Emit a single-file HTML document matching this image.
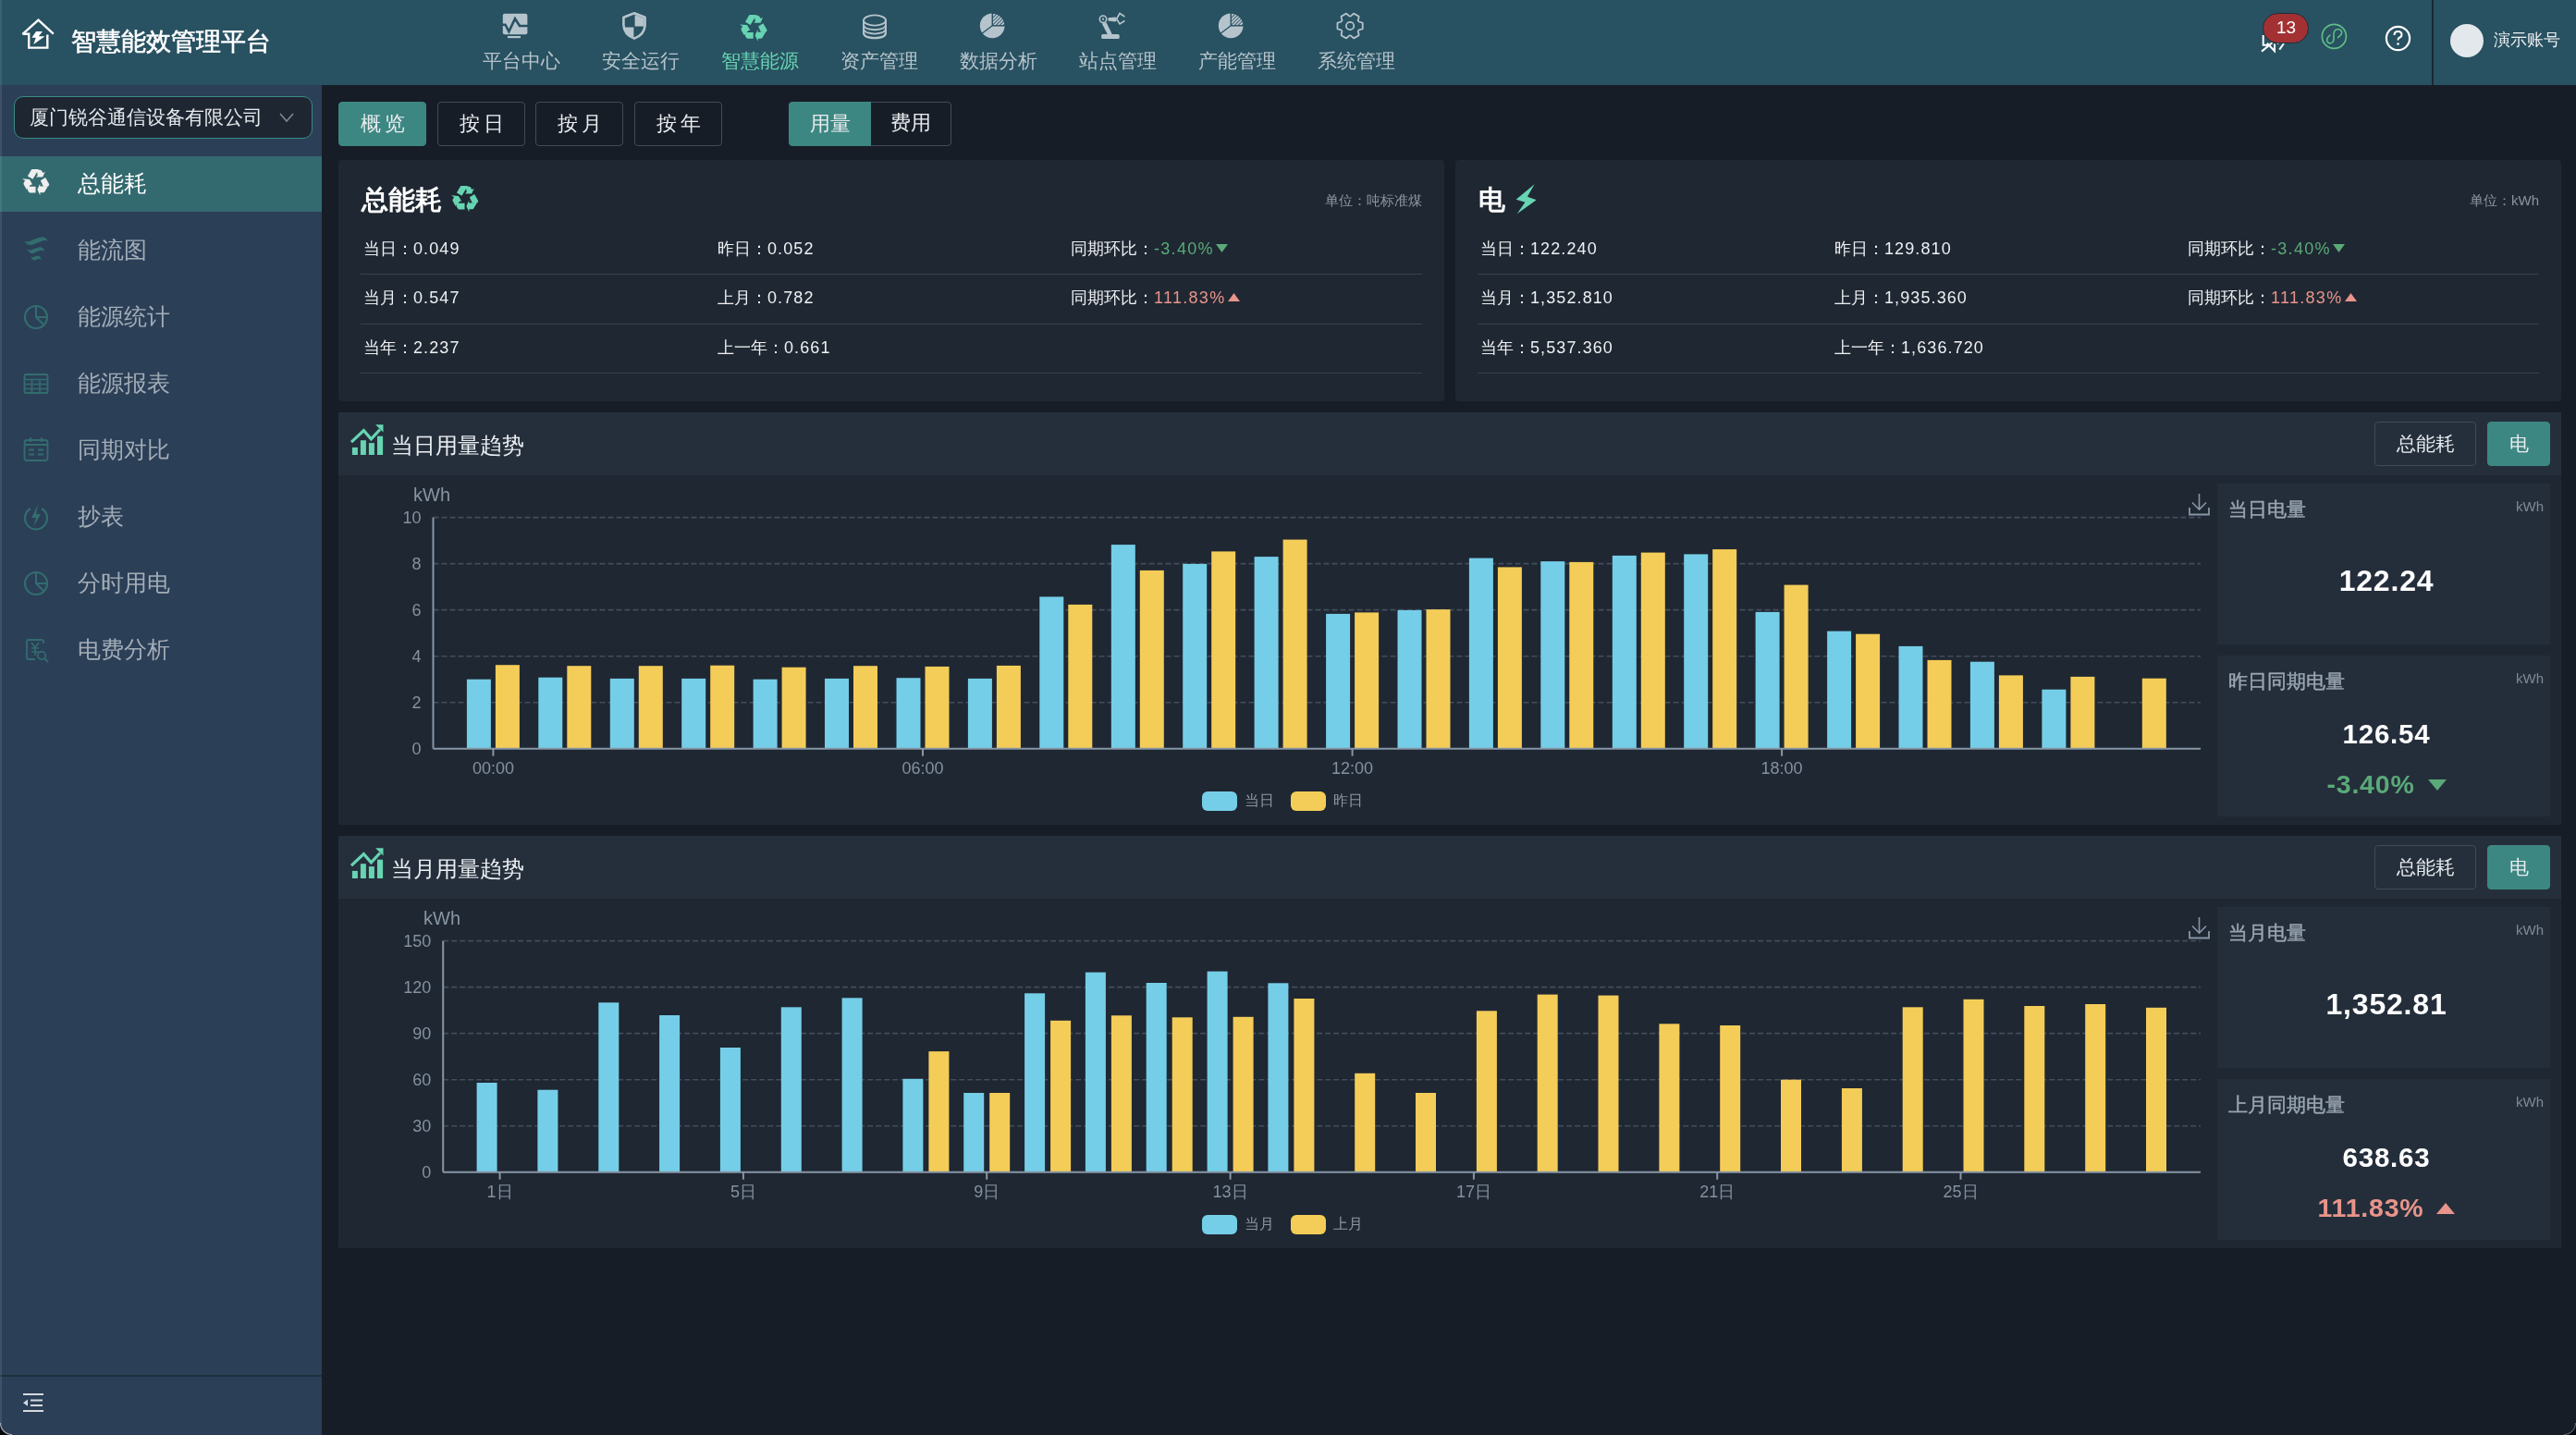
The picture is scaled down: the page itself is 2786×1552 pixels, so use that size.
<!DOCTYPE html><html><head><meta charset="utf-8"><style>
*{box-sizing:border-box;margin:0;padding:0}
html,body{width:2786px;height:1552px;overflow:hidden;background:#171d27;font-family:"Liberation Sans",sans-serif;color:#f2f4f6}
.a{position:absolute}
.t{position:absolute;white-space:nowrap;line-height:1;will-change:transform}
.btn{position:absolute;border:1px solid #404c59;border-radius:4px;display:flex;align-items:center;justify-content:center;font-size:22px;color:#e8ecef;will-change:transform}
.btn.on{background:#3d8782;border-color:#3d8782}
</style></head><body>

<div class="a" style="left:0;top:0;width:2786px;height:92px;background:#285161"></div>
<svg class="a" style="left:20px;top:15px" width="44" height="44" viewBox="20 15 44 44">
<path d="M24.5 36.8 L41.5 21.5 L57.8 36.6" fill="none" stroke="#fff" stroke-width="2.4" stroke-linejoin="miter"/>
<path d="M24.5 36.8 L31.2 36.8 L31.2 51.6 L51.3 51.6 L51.3 37.6" fill="none" stroke="#fff" stroke-width="2.4"/>
<path d="M46 34 L39 34 L34.4 40.8 L38.7 40.8 L36.3 48.1 L48.5 39.2 L41.8 39.2 Z" fill="#fff"/>
</svg>
<div class="t" style="left:77px;top:32px;font-size:27px;color:#fff;-webkit-text-stroke:0.6px #fff">智慧能效管理平台</div>
<div class="t" style="left:522px;top:55px;font-size:21px;color:#b6c3cb">平台中心</div>
<div class="t" style="left:651px;top:55px;font-size:21px;color:#b6c3cb">安全运行</div>
<div class="t" style="left:780px;top:55px;font-size:21px;color:#67d4b2">智慧能源</div>
<div class="t" style="left:909px;top:55px;font-size:21px;color:#b6c3cb">资产管理</div>
<div class="t" style="left:1038px;top:55px;font-size:21px;color:#b6c3cb">数据分析</div>
<div class="t" style="left:1167px;top:55px;font-size:21px;color:#b6c3cb">站点管理</div>
<div class="t" style="left:1296px;top:55px;font-size:21px;color:#b6c3cb">产能管理</div>
<div class="t" style="left:1425px;top:55px;font-size:21px;color:#b6c3cb">系统管理</div>
<svg class="a" style="left:537px;top:8px" width="40" height="40" viewBox="0 0 40 40"><rect x="6.8" y="6.7" width="26.6" height="22.5" rx="2" fill="#b5c4cc"/><rect x="12" y="31" width="14" height="2.2" fill="#b5c4cc"/><path d="M5 18.7 L9.5 18.7 L13.4 26 L20 12.2 L25 20 L35 20" fill="none" stroke="#285161" stroke-width="2.6"/></svg>
<svg class="a" style="left:666px;top:8px" width="40" height="40" viewBox="0 0 40 40"><path d="M20 6.3 L31.6 10.8 L31.6 19 Q31.2 29.5 20 33.6 Q8.8 29.5 8.4 19 L8.4 10.8 Z" fill="none" stroke="#b5c4cc" stroke-width="2.6" stroke-linejoin="round"/><path d="M20.6 8 L30.5 11.8 L30.5 20.6 L20.6 20.6 Z" fill="#b5c4cc"/><path d="M9.5 21.4 L19.4 21.4 L19.4 32.3 Q10.5 28.5 9.5 21.4 Z" fill="#b5c4cc"/></svg>
<svg style="position:absolute;left:796px;top:10.7px" width="38.4" height="38.4" viewBox="0 0 1435 1435"><path d="M375 475 L525 210 L565 190 L830 190 L585 595 Z M760 300 L790 235 L870 205 L940 250 L1000 340 L1085 295 L990 510 L720 510 L780 445 Z M900 655 L1100 530 L1255 800 L1230 875 L1005 875 Z M880 890 L1205 880 L1055 1130 L1010 1145 L885 1145 L880 1260 L770 1020 L880 775 Z M400 900 L700 900 L700 1150 L470 1150 L430 1130 L365 1025 Z M330 1020 L215 815 L205 760 L265 650 L150 580 L450 600 L570 810 L500 820 Z" fill="#67d4b2"/></svg>
<svg class="a" style="left:924px;top:8px" width="40" height="40" viewBox="0 0 40 40"><ellipse cx="22" cy="14" rx="12" ry="5.6" fill="none" stroke="#b5c4cc" stroke-width="1.9"/><path d="M10 14 L10 27.5 Q10 33 22 33.4 Q34 33 34 27.5 L34 14" fill="none" stroke="#b5c4cc" stroke-width="1.9"/><path d="M10 18.8 Q10 23.8 22 24.3 Q34 23.8 34 18.8" fill="none" stroke="#b5c4cc" stroke-width="1.9"/><path d="M10 23.1 Q10 28.1 22 28.6 Q34 28.1 34 23.1" fill="none" stroke="#b5c4cc" stroke-width="1.9"/><path d="M10 27.4 Q10 32.4 22 32.9 Q34 32.4 34 27.4" fill="none" stroke="#b5c4cc" stroke-width="1.9"/></svg>
<svg class="a" style="left:1053px;top:8px" width="40" height="40" viewBox="0 0 40 40"><defs><clipPath id="pc4"><path d="M20.9 19.1 L20.9 5.4 L34.6 5.4 L34.6 19.1 Z"/></clipPath></defs><circle cx="20.2" cy="19.8" r="13.4" fill="#b5c4cc"/><path d="M20.2 19.8 L20.2 5.4 L34.6 5.4 L34.6 19.8 Z" fill="#285161"/><g clip-path="url(#pc4)"><circle cx="20.2" cy="19.8" r="13.4" fill="none" stroke="#b5c4cc" stroke-width="0"/><g clip-path="url(#pq4)"><line x1="4.199999999999999" y1="21.8" x2="20.2" y2="5.800000000000001" stroke="#b5c4cc" stroke-width="1.9"/><line x1="8.1" y1="21.8" x2="24.099999999999998" y2="5.800000000000001" stroke="#b5c4cc" stroke-width="1.9"/><line x1="12.0" y1="21.8" x2="28.0" y2="5.800000000000001" stroke="#b5c4cc" stroke-width="1.9"/><line x1="15.899999999999999" y1="21.8" x2="31.9" y2="5.800000000000001" stroke="#b5c4cc" stroke-width="1.9"/><line x1="19.799999999999997" y1="21.8" x2="35.8" y2="5.800000000000001" stroke="#b5c4cc" stroke-width="1.9"/><line x1="23.7" y1="21.8" x2="39.7" y2="5.800000000000001" stroke="#b5c4cc" stroke-width="1.9"/><line x1="27.599999999999998" y1="21.8" x2="43.599999999999994" y2="5.800000000000001" stroke="#b5c4cc" stroke-width="1.9"/><line x1="31.5" y1="21.8" x2="47.5" y2="5.800000000000001" stroke="#b5c4cc" stroke-width="1.9"/><line x1="35.4" y1="21.8" x2="51.4" y2="5.800000000000001" stroke="#b5c4cc" stroke-width="1.9"/></g></g><defs><clipPath id="pq4"><circle cx="20.2" cy="19.8" r="13.1"/></clipPath></defs><path d="M20.2 5.4 L20.2 19.8 L34.6 19.8 M20.2 19.8 L9.0 28.3" fill="none" stroke="#285161" stroke-width="1.3"/></svg>
<svg class="a" style="left:1311px;top:8px" width="40" height="40" viewBox="0 0 40 40"><defs><clipPath id="pc6"><path d="M20.9 19.1 L20.9 5.4 L34.6 5.4 L34.6 19.1 Z"/></clipPath></defs><circle cx="20.2" cy="19.8" r="13.4" fill="#b5c4cc"/><path d="M20.2 19.8 L20.2 5.4 L34.6 5.4 L34.6 19.8 Z" fill="#285161"/><g clip-path="url(#pc6)"><circle cx="20.2" cy="19.8" r="13.4" fill="none" stroke="#b5c4cc" stroke-width="0"/><g clip-path="url(#pq6)"><line x1="4.199999999999999" y1="21.8" x2="20.2" y2="5.800000000000001" stroke="#b5c4cc" stroke-width="1.9"/><line x1="8.1" y1="21.8" x2="24.099999999999998" y2="5.800000000000001" stroke="#b5c4cc" stroke-width="1.9"/><line x1="12.0" y1="21.8" x2="28.0" y2="5.800000000000001" stroke="#b5c4cc" stroke-width="1.9"/><line x1="15.899999999999999" y1="21.8" x2="31.9" y2="5.800000000000001" stroke="#b5c4cc" stroke-width="1.9"/><line x1="19.799999999999997" y1="21.8" x2="35.8" y2="5.800000000000001" stroke="#b5c4cc" stroke-width="1.9"/><line x1="23.7" y1="21.8" x2="39.7" y2="5.800000000000001" stroke="#b5c4cc" stroke-width="1.9"/><line x1="27.599999999999998" y1="21.8" x2="43.599999999999994" y2="5.800000000000001" stroke="#b5c4cc" stroke-width="1.9"/><line x1="31.5" y1="21.8" x2="47.5" y2="5.800000000000001" stroke="#b5c4cc" stroke-width="1.9"/><line x1="35.4" y1="21.8" x2="51.4" y2="5.800000000000001" stroke="#b5c4cc" stroke-width="1.9"/></g></g><defs><clipPath id="pq6"><circle cx="20.2" cy="19.8" r="13.1"/></clipPath></defs><path d="M20.2 5.4 L20.2 19.8 L34.6 19.8 M20.2 19.8 L9.0 28.3" fill="none" stroke="#285161" stroke-width="1.3"/></svg>
<svg class="a" style="left:1182px;top:8px" width="40" height="40" viewBox="0 0 40 40"><circle cx="11" cy="12.7" r="3.7" fill="none" stroke="#b5c4cc" stroke-width="1.6"/><circle cx="11" cy="12.7" r="1.1" fill="#b5c4cc"/><path d="M16.5 11.3 L24 10.5 L25.5 11.5 L25.5 14.5 L24 15.5 L16.5 14.5 Z" fill="#b5c4cc"/><path d="M25.6 12.5 L29 6.5 L34.4 10" fill="none" stroke="#b5c4cc" stroke-width="1.6"/><path d="M25.6 12.5 L29 18 L34.4 14.5" fill="none" stroke="#b5c4cc" stroke-width="1.6"/><path d="M9.8 17.5 L14.5 16.2 L21 29.5 L16.5 30.5 Z" fill="#b5c4cc"/><rect x="9.2" y="29" width="19.5" height="5" rx="1.6" fill="#b5c4cc"/></svg>
<svg class="a" style="left:1440px;top:8px" width="40" height="40" viewBox="0 0 40 40"><path d="M33.74 16.85 L33.74 23.15 L31.64 23.97 Q27.55 24.30 29.31 28.00 L29.65 30.24 L24.19 33.39 L22.43 31.98 Q20.10 28.60 17.77 31.98 L16.01 33.39 L10.55 30.24 L10.89 28.00 Q12.65 24.30 8.56 23.97 L6.46 23.15 L6.46 16.85 L8.56 16.03 Q12.65 15.70 10.89 12.00 L10.55 9.76 L16.01 6.61 L17.77 8.02 Q20.10 11.40 22.43 8.02 L24.19 6.61 L29.65 9.76 L29.31 12.00 Q27.55 15.70 31.64 16.03 Z" fill="none" stroke="#b5c4cc" stroke-width="1.8" stroke-linejoin="round"/><circle cx="20.1" cy="20.0" r="4.2" fill="none" stroke="#b5c4cc" stroke-width="1.8"/></svg>
<svg class="a" style="left:2440px;top:30px" width="40" height="30" viewBox="0 0 40 30"><path d="M7.7 8 V18.7 H12.5 M6 25.6 L17.5 16.3 M12 16.7 L20 25.2 V17.5 M25.3 23.6 L30 17" fill="none" stroke="#fff" stroke-width="2"/><circle cx="23.6" cy="16.9" r="0.9" fill="#fff"/></svg>
<div class="a" style="left:2447px;top:14px;width:50px;height:33px;border-radius:17px;background:#a33134;border:1.5px solid #1f2d38"></div>
<div class="t" style="left:2462px;top:20px;font-size:19px;color:#fff">13</div>
<svg class="a" style="left:2509px;top:24px" width="31" height="31" viewBox="0 0 31 31"><circle cx="15.4" cy="15.4" r="13" fill="none" stroke="#5fbd87" stroke-width="1.7"/><path d="M10.9 14.1 Q6.5 17.5 8 21 Q10.5 24.5 13.8 21.5 Q15.5 19.5 15 15 Q14.5 9.5 17.5 8 Q21.5 6.5 23.5 10 Q24.5 13 19.5 16.6" fill="none" stroke="#5fbd87" stroke-width="1.6" stroke-linecap="round"/></svg>
<svg class="a" style="left:2578px;top:26px" width="31" height="31" viewBox="0 0 31 31"><circle cx="15.5" cy="15.5" r="12.6" fill="none" stroke="#fff" stroke-width="2.2"/><path d="M11.5 12 Q11.5 8 15.5 8 Q19.5 8 19.5 11.5 Q19.5 14 16.5 15 Q15.5 15.5 15.5 17.5" fill="none" stroke="#fff" stroke-width="2"/><circle cx="15.5" cy="21.5" r="1.3" fill="#fff"/></svg>
<div class="a" style="left:2630px;top:0;width:2px;height:92px;background:#1b2833"></div>
<div class="a" style="left:2650px;top:26px;width:36px;height:36px;border-radius:50%;background:#e3e8ec"></div>
<div class="t" style="left:2697px;top:34px;font-size:18px;color:#eef1f3">演示账号</div>
<div class="a" style="left:0;top:92px;width:348px;height:1460px;background:#2b3f57"></div>
<div class="a" style="left:15px;top:104px;width:323px;height:46px;border:1.5px solid #3b8c86;border-radius:10px;background:#1e2632"></div>
<div class="t" style="left:32px;top:116px;font-size:21px;color:#e6e9ec">厦门锐谷通信设备有限公司</div>
<svg class="a" style="left:300px;top:119px" width="20" height="16" viewBox="0 0 20 16"><path d="M3 4 L10 12 L17 4" fill="none" stroke="#7d8893" stroke-width="1.6"/></svg>
<div class="a" style="left:0;top:169px;width:348px;height:60px;background:#336a6f"></div>
<div class="t" style="left:84px;top:186px;font-size:25px;color:#ffffff">总能耗</div>
<div class="t" style="left:84px;top:258px;font-size:25px;color:#a3adb7">能流图</div>
<div class="t" style="left:84px;top:330px;font-size:25px;color:#a3adb7">能源统计</div>
<div class="t" style="left:84px;top:402px;font-size:25px;color:#a3adb7">能源报表</div>
<div class="t" style="left:84px;top:474px;font-size:25px;color:#a3adb7">同期对比</div>
<div class="t" style="left:84px;top:546px;font-size:25px;color:#a3adb7">抄表</div>
<div class="t" style="left:84px;top:618px;font-size:25px;color:#a3adb7">分时用电</div>
<div class="t" style="left:84px;top:690px;font-size:25px;color:#a3adb7">电费分析</div>
<svg style="position:absolute;left:20px;top:177.6px" width="38" height="38" viewBox="0 0 1435 1435"><path d="M375 475 L525 210 L565 190 L830 190 L585 595 Z M760 300 L790 235 L870 205 L940 250 L1000 340 L1085 295 L990 510 L720 510 L780 445 Z M900 655 L1100 530 L1255 800 L1230 875 L1005 875 Z M880 890 L1205 880 L1055 1130 L1010 1145 L885 1145 L880 1260 L770 1020 L880 775 Z M400 900 L700 900 L700 1150 L470 1150 L430 1130 L365 1025 Z M330 1020 L215 815 L205 760 L265 650 L150 580 L450 600 L570 810 L500 820 Z" fill="#eeeeee"/></svg>
<svg class="a" style="left:22px;top:254px" width="34" height="34" viewBox="0 0 34 34"><path d="M3.9 6.8 Q8 12.5 14 10.5 Q20 8 24.5 6.3 Q27.5 5.5 29.9 6.8 Q27 1.5 22 2.5 Q16 4 11 6.5 Q7 8.5 3.9 6.8 Z M7.1 15.3 Q10 21.5 15 19.8 Q19.5 17.5 22.5 16.8 Q24.5 16.5 26.7 17.6 Q24 12 19.5 13.5 Q15 15 11.5 16.2 Q9 17 7.1 15.3 Z M11.2 23.2 Q13 28.8 16.5 27.2 Q19 25.8 20.5 26 Q21.8 26.2 22.9 27 Q21 21 17.5 22.8 Q15 24 13.5 24.2 Q12 24.3 11.2 23.2 Z" fill="#336d6e"/></svg>
<svg class="a" style="left:22px;top:326px" width="34" height="34" viewBox="0 0 34 34"><circle cx="17" cy="17" r="12" fill="none" stroke="#336d6e" stroke-width="2.2"/><path d="M17 5 L17 17 L29 17 M17 17 L25 25" fill="none" stroke="#336d6e" stroke-width="2"/></svg>
<svg class="a" style="left:22px;top:398px" width="34" height="34" viewBox="0 0 34 34"><rect x="4.5" y="7" width="25" height="20" rx="1" fill="none" stroke="#336d6e" stroke-width="1.8"/><path d="M4.5 12.5 H29.5 M4.5 17.5 H29.5 M4.5 22.5 H29.5 M12.5 12.5 V27 M21 12.5 V27" stroke="#336d6e" stroke-width="1.6"/></svg>
<svg class="a" style="left:22px;top:470px" width="34" height="34" viewBox="0 0 34 34"><rect x="4.5" y="6" width="25" height="22" rx="2.5" fill="none" stroke="#336d6e" stroke-width="1.8"/><path d="M11 3 V8 M23 3 V8 M4.5 11 H29.5 M9 16.5 H15 M19 16.5 H25 M9 21.5 H15 M19 21.5 H25" stroke="#336d6e" stroke-width="1.8"/></svg>
<svg class="a" style="left:22px;top:542px" width="34" height="34" viewBox="0 0 34 34"><path d="M11 8 A12 12 0 1 0 23 8" fill="none" stroke="#336d6e" stroke-width="2.2"/><path d="M19 4 L12 18 L17 18 L14 28 L22 14 L17 14 Z" fill="#336d6e"/></svg>
<svg class="a" style="left:22px;top:614px" width="34" height="34" viewBox="0 0 34 34"><circle cx="17" cy="17" r="12" fill="none" stroke="#336d6e" stroke-width="2.2"/><path d="M17 5 L17 17 L29 17 M17 17 L25 25" fill="none" stroke="#336d6e" stroke-width="2"/></svg>
<svg class="a" style="left:22px;top:686px" width="34" height="34" viewBox="0 0 34 34"><path d="M25 10 L25 8 Q25 6 23 6 L9 6 Q7 6 7 8 L7 25 Q7 27 9 27 L16 27" fill="none" stroke="#336d6e" stroke-width="1.8"/><path d="M12 9 L16 14 L20 9 M12 15 H20 M12 19 H20 M16 14 V23" stroke="#336d6e" stroke-width="1.6" fill="none"/><circle cx="23" cy="23" r="4.2" fill="none" stroke="#336d6e" stroke-width="1.8"/><path d="M26 26 L30 30" stroke="#336d6e" stroke-width="2"/></svg>
<div class="a" style="left:0;top:1487px;width:348px;height:2px;background:#1f2e3c"></div>
<svg class="a" style="left:24px;top:1505px" width="24" height="24" viewBox="0 0 24 24"><path d="M1 3 H23 M9 9.5 H22 M9 15 H22 M1 21 H23" stroke="#d5d9dd" stroke-width="2.2"/><path d="M1 12.2 L6 8.6 L6 15.8 Z" fill="#d5d9dd"/></svg>
<div class="btn on" style="left:366px;top:110px;width:95px;height:48px;letter-spacing:4px;padding-left:4px">概览</div>
<div class="btn" style="left:473px;top:110px;width:95px;height:48px;letter-spacing:4px;padding-left:4px">按日</div>
<div class="btn" style="left:579px;top:110px;width:95px;height:48px;letter-spacing:4px;padding-left:4px">按月</div>
<div class="btn" style="left:686px;top:110px;width:95px;height:48px;letter-spacing:4px;padding-left:4px">按年</div>
<div class="a" style="left:853px;top:110px;width:176px;height:48px;border:1px solid #404c59;border-radius:4px"></div>
<div class="btn on" style="left:853px;top:110px;width:89px;height:48px;border-radius:4px 0 0 4px">用量</div>
<div class="t" style="left:963px;top:122px;font-size:22px;color:#e8ecef">费用</div>
<div class="a" style="left:366px;top:173px;width:1196px;height:261px;background:#1f2732;border-radius:4px"></div>
<div class="t" style="left:391px;top:201.5px;font-size:29px;font-weight:bold;color:#fff">总能耗</div>
<svg style="position:absolute;left:484px;top:196px" width="38" height="38" viewBox="0 0 1435 1435"><path d="M375 475 L525 210 L565 190 L830 190 L585 595 Z M760 300 L790 235 L870 205 L940 250 L1000 340 L1085 295 L990 510 L720 510 L780 445 Z M900 655 L1100 530 L1255 800 L1230 875 L1005 875 Z M880 890 L1205 880 L1055 1130 L1010 1145 L885 1145 L880 1260 L770 1020 L880 775 Z M400 900 L700 900 L700 1150 L470 1150 L430 1130 L365 1025 Z M330 1020 L215 815 L205 760 L265 650 L150 580 L450 600 L570 810 L500 820 Z" fill="#67d4b2"/></svg>
<div class="t" style="right:1248px;top:209px;font-size:15px;color:#8c96a0">单位：吨标准煤</div>
<div class="a" style="left:390px;top:296.4px;width:1148px;height:1px;background:#38414d"></div>
<div class="t" style="left:393.0px;top:260.0px;font-size:18px;color:#eef0f2">当日：<span style="letter-spacing:1.1px">0.049</span></div>
<div class="t" style="left:775.5px;top:260.0px;font-size:18px;color:#eef0f2">昨日：<span style="letter-spacing:1.1px">0.052</span></div>
<div class="a" style="left:390px;top:349.9px;width:1148px;height:1px;background:#38414d"></div>
<div class="t" style="left:393.0px;top:313.3px;font-size:18px;color:#eef0f2">当月：<span style="letter-spacing:1.1px">0.547</span></div>
<div class="t" style="left:775.5px;top:313.3px;font-size:18px;color:#eef0f2">上月：<span style="letter-spacing:1.1px">0.782</span></div>
<div class="a" style="left:390px;top:403.4px;width:1148px;height:1px;background:#38414d"></div>
<div class="t" style="left:393.0px;top:366.6px;font-size:18px;color:#eef0f2">当年：<span style="letter-spacing:1.1px">2.237</span></div>
<div class="t" style="left:775.5px;top:366.6px;font-size:18px;color:#eef0f2">上一年：<span style="letter-spacing:1.1px">0.661</span></div>
<div class="t" style="left:1158px;top:260.0px;font-size:18px;color:#eef0f2">同期环比：<span style="color:#5aaa78;letter-spacing:1.3px">-3.40%</span><svg width="13" height="9" viewBox="0 0 13 9" style="margin-left:2px;vertical-align:2px"><path d="M0 0 L13 0 L6.5 9 Z" fill="#5aaa78"/></svg></div>
<div class="t" style="left:1158px;top:313.3px;font-size:18px;color:#eef0f2">同期环比：<span style="color:#e8948a;letter-spacing:1.3px">111.83%</span><svg width="13" height="9" viewBox="0 0 13 9" style="margin-left:2px;vertical-align:2px"><path d="M0 9 L13 9 L6.5 0 Z" fill="#e8948a"/></svg></div>
<div class="a" style="left:1574px;top:173px;width:1196px;height:261px;background:#1f2732;border-radius:4px"></div>
<div class="t" style="left:1599px;top:201.5px;font-size:29px;font-weight:bold;color:#fff">电</div>
<svg class="a" style="left:1637px;top:199px" width="28" height="34" viewBox="0 0 28 34"><path d="M22.6 0.3 L2.6 16.7 L12.4 19.7 L3.7 32.3 L24.7 17.2 L14.9 13.7 Z" fill="#67d4b2"/></svg>
<div class="t" style="right:40px;top:209px;font-size:15px;color:#8c96a0">单位：kWh</div>
<div class="a" style="left:1598px;top:296.4px;width:1148px;height:1px;background:#38414d"></div>
<div class="t" style="left:1601.0px;top:260.0px;font-size:18px;color:#eef0f2">当日：<span style="letter-spacing:1.1px">122.240</span></div>
<div class="t" style="left:1983.5px;top:260.0px;font-size:18px;color:#eef0f2">昨日：<span style="letter-spacing:1.1px">129.810</span></div>
<div class="a" style="left:1598px;top:349.9px;width:1148px;height:1px;background:#38414d"></div>
<div class="t" style="left:1601.0px;top:313.3px;font-size:18px;color:#eef0f2">当月：<span style="letter-spacing:1.1px">1,352.810</span></div>
<div class="t" style="left:1983.5px;top:313.3px;font-size:18px;color:#eef0f2">上月：<span style="letter-spacing:1.1px">1,935.360</span></div>
<div class="a" style="left:1598px;top:403.4px;width:1148px;height:1px;background:#38414d"></div>
<div class="t" style="left:1601.0px;top:366.6px;font-size:18px;color:#eef0f2">当年：<span style="letter-spacing:1.1px">5,537.360</span></div>
<div class="t" style="left:1983.5px;top:366.6px;font-size:18px;color:#eef0f2">上一年：<span style="letter-spacing:1.1px">1,636.720</span></div>
<div class="t" style="left:2366px;top:260.0px;font-size:18px;color:#eef0f2">同期环比：<span style="color:#5aaa78;letter-spacing:1.3px">-3.40%</span><svg width="13" height="9" viewBox="0 0 13 9" style="margin-left:2px;vertical-align:2px"><path d="M0 0 L13 0 L6.5 9 Z" fill="#5aaa78"/></svg></div>
<div class="t" style="left:2366px;top:313.3px;font-size:18px;color:#eef0f2">同期环比：<span style="color:#e8948a;letter-spacing:1.3px">111.83%</span><svg width="13" height="9" viewBox="0 0 13 9" style="margin-left:2px;vertical-align:2px"><path d="M0 9 L13 9 L6.5 0 Z" fill="#e8948a"/></svg></div>
<div class="a" style="left:366px;top:446px;width:2404px;height:446px;background:#1f2732;overflow:hidden"><div class="a" style="left:0;top:0;width:2404px;height:68px;background:#252f3c"></div></div>
<svg class="a" style="left:378px;top:458px" width="40" height="36" viewBox="0 0 40 36"><rect x="2.9" y="25.9" width="6" height="8.1" fill="#67d4b2"/><rect x="11.9" y="18.2" width="6" height="15.8" fill="#67d4b2"/><rect x="20.9" y="21.1" width="6" height="12.9" fill="#67d4b2"/><rect x="30" y="13.7" width="6.1" height="20.3" fill="#67d4b2"/><path d="M2 20.1 L15.4 7.6 L23.4 16.8 L33 6.5" fill="none" stroke="#67d4b2" stroke-width="3.2"/><path d="M28.1 1.2 L36.5 1.2 L36.5 9.4 Z" fill="#67d4b2"/></svg>
<div class="t" style="left:423px;top:470px;font-size:24px;color:#eceff2">当日用量趋势</div>
<div class="btn" style="left:2568px;top:456px;width:110px;height:48px;font-size:21px">总能耗</div>
<div class="btn on" style="left:2690px;top:456px;width:68px;height:48px;font-size:21px">电</div>
<svg class="a" style="left:0;top:0" width="2786" height="1552" viewBox="0 0 2786 1552"><text x="455.5" y="816.2" text-anchor="end" font-size="18" fill="#8491a1" font-family="Liberation Sans">0</text><line x1="468.5" y1="759.7" x2="2380" y2="759.7" stroke="#424e5c" stroke-width="1.6" stroke-dasharray="6 3"/><text x="455.5" y="766.2" text-anchor="end" font-size="18" fill="#8491a1" font-family="Liberation Sans">2</text><line x1="468.5" y1="709.7" x2="2380" y2="709.7" stroke="#424e5c" stroke-width="1.6" stroke-dasharray="6 3"/><text x="455.5" y="716.2" text-anchor="end" font-size="18" fill="#8491a1" font-family="Liberation Sans">4</text><line x1="468.5" y1="659.6" x2="2380" y2="659.6" stroke="#424e5c" stroke-width="1.6" stroke-dasharray="6 3"/><text x="455.5" y="666.1" text-anchor="end" font-size="18" fill="#8491a1" font-family="Liberation Sans">6</text><line x1="468.5" y1="609.6" x2="2380" y2="609.6" stroke="#424e5c" stroke-width="1.6" stroke-dasharray="6 3"/><text x="455.5" y="616.1" text-anchor="end" font-size="18" fill="#8491a1" font-family="Liberation Sans">8</text><line x1="468.5" y1="559.6" x2="2380" y2="559.6" stroke="#424e5c" stroke-width="1.6" stroke-dasharray="6 3"/><text x="455.5" y="566.1" text-anchor="end" font-size="18" fill="#8491a1" font-family="Liberation Sans">10</text><line x1="468.5" y1="559.6" x2="468.5" y2="809.7" stroke="#8796a6" stroke-width="2"/><rect x="504.9" y="734.7" width="26" height="75.0" fill="#75cee8"/><rect x="535.9" y="719.2" width="26" height="90.5" fill="#f4cd58"/><rect x="582.3" y="732.7" width="26" height="77.0" fill="#75cee8"/><rect x="613.3" y="720.2" width="26" height="89.5" fill="#f4cd58"/><rect x="659.8" y="733.9" width="26" height="75.8" fill="#75cee8"/><rect x="690.8" y="720.2" width="26" height="89.5" fill="#f4cd58"/><rect x="737.2" y="733.9" width="26" height="75.8" fill="#75cee8"/><rect x="768.2" y="719.7" width="26" height="90.0" fill="#f4cd58"/><rect x="814.6" y="734.7" width="26" height="75.0" fill="#75cee8"/><rect x="845.6" y="721.7" width="26" height="88.0" fill="#f4cd58"/><rect x="892.0" y="733.9" width="26" height="75.8" fill="#75cee8"/><rect x="923.0" y="720.2" width="26" height="89.5" fill="#f4cd58"/><rect x="969.5" y="733.2" width="26" height="76.5" fill="#75cee8"/><rect x="1000.5" y="720.9" width="26" height="88.8" fill="#f4cd58"/><rect x="1046.9" y="733.9" width="26" height="75.8" fill="#75cee8"/><rect x="1077.9" y="719.9" width="26" height="89.8" fill="#f4cd58"/><rect x="1124.3" y="645.4" width="26" height="164.3" fill="#75cee8"/><rect x="1155.3" y="653.9" width="26" height="155.8" fill="#f4cd58"/><rect x="1201.8" y="589.1" width="26" height="220.6" fill="#75cee8"/><rect x="1232.8" y="616.9" width="26" height="192.8" fill="#f4cd58"/><rect x="1279.2" y="609.9" width="26" height="199.8" fill="#75cee8"/><rect x="1310.2" y="596.4" width="26" height="213.3" fill="#f4cd58"/><rect x="1356.6" y="602.1" width="26" height="207.6" fill="#75cee8"/><rect x="1387.6" y="583.6" width="26" height="226.1" fill="#f4cd58"/><rect x="1434.1" y="663.9" width="26" height="145.8" fill="#75cee8"/><rect x="1465.1" y="662.4" width="26" height="147.3" fill="#f4cd58"/><rect x="1511.5" y="659.9" width="26" height="149.8" fill="#75cee8"/><rect x="1542.5" y="659.1" width="26" height="150.6" fill="#f4cd58"/><rect x="1588.9" y="603.6" width="26" height="206.1" fill="#75cee8"/><rect x="1619.9" y="613.4" width="26" height="196.3" fill="#f4cd58"/><rect x="1666.3" y="607.1" width="26" height="202.6" fill="#75cee8"/><rect x="1697.3" y="607.9" width="26" height="201.8" fill="#f4cd58"/><rect x="1743.8" y="600.9" width="26" height="208.8" fill="#75cee8"/><rect x="1774.8" y="597.6" width="26" height="212.1" fill="#f4cd58"/><rect x="1821.2" y="599.4" width="26" height="210.3" fill="#75cee8"/><rect x="1852.2" y="594.1" width="26" height="215.6" fill="#f4cd58"/><rect x="1898.6" y="661.9" width="26" height="147.8" fill="#75cee8"/><rect x="1929.6" y="632.6" width="26" height="177.1" fill="#f4cd58"/><rect x="1976.1" y="682.6" width="26" height="127.1" fill="#75cee8"/><rect x="2007.1" y="685.7" width="26" height="124.0" fill="#f4cd58"/><rect x="2053.5" y="698.9" width="26" height="110.8" fill="#75cee8"/><rect x="2084.5" y="713.9" width="26" height="95.8" fill="#f4cd58"/><rect x="2130.9" y="715.7" width="26" height="94.0" fill="#75cee8"/><rect x="2161.9" y="730.4" width="26" height="79.3" fill="#f4cd58"/><rect x="2208.4" y="745.7" width="26" height="64.0" fill="#75cee8"/><rect x="2239.4" y="731.9" width="26" height="77.8" fill="#f4cd58"/><rect x="2316.8" y="733.7" width="26" height="76.0" fill="#f4cd58"/><line x1="468.5" y1="809.7" x2="2380" y2="809.7" stroke="#8796a6" stroke-width="2"/><line x1="533.4" y1="809.7" x2="533.4" y2="817.7" stroke="#8796a6" stroke-width="2"/><text x="533.4" y="836.7" text-anchor="middle" font-size="18" fill="#8491a1" font-family="Liberation Sans">00:00</text><line x1="998.0" y1="809.7" x2="998.0" y2="817.7" stroke="#8796a6" stroke-width="2"/><text x="998.0" y="836.7" text-anchor="middle" font-size="18" fill="#8491a1" font-family="Liberation Sans">06:00</text><line x1="1462.6" y1="809.7" x2="1462.6" y2="817.7" stroke="#8796a6" stroke-width="2"/><text x="1462.6" y="836.7" text-anchor="middle" font-size="18" fill="#8491a1" font-family="Liberation Sans">12:00</text><line x1="1927.1" y1="809.7" x2="1927.1" y2="817.7" stroke="#8796a6" stroke-width="2"/><text x="1927.1" y="836.7" text-anchor="middle" font-size="18" fill="#8491a1" font-family="Liberation Sans">18:00</text></svg>
<div class="t" style="left:447px;top:525px;font-size:20px;color:#8795a4">kWh</div>
<svg class="a" style="left:2366px;top:533px" width="25" height="26" viewBox="0 0 25 26"><path d="M12.5 1 V18 M5 10.5 L12.5 18 L20 10.5" fill="none" stroke="#8796a6" stroke-width="1.6"/><path d="M2 16 V23.5 H23 V16" fill="none" stroke="#8796a6" stroke-width="1.8"/></svg>
<div class="a" style="left:1300px;top:856px;width:38px;height:21px;border-radius:6px;background:#75cee8"></div>
<div class="t" style="left:1346px;top:858px;font-size:16px;color:#8c97a3">当日</div>
<div class="a" style="left:1396px;top:856px;width:38px;height:21px;border-radius:6px;background:#f4cd58"></div>
<div class="t" style="left:1442px;top:858px;font-size:16px;color:#8c97a3">昨日</div>
<div class="a" style="left:2398px;top:523px;width:360px;height:174px;background:#242e3b"></div>
<div class="a" style="left:2398px;top:709px;width:360px;height:174px;background:#242e3b"></div>
<div class="t" style="left:2410px;top:540px;font-size:21px;color:#9aa6b2;-webkit-text-stroke:0.4px #9aa6b2">当日电量</div>
<div class="t" style="right:35px;top:540px;font-size:15px;color:#7f8a95">kWh</div>
<div class="t" style="left:2401px;width:360px;text-align:center;top:612px;font-size:32px;letter-spacing:0.8px;font-weight:bold;color:#fff">122.24</div>
<div class="t" style="left:2410px;top:726px;font-size:21px;color:#9aa6b2;-webkit-text-stroke:0.4px #9aa6b2">昨日同期电量</div>
<div class="t" style="right:35px;top:726px;font-size:15px;color:#7f8a95">kWh</div>
<div class="t" style="left:2401px;width:360px;text-align:center;top:779px;font-size:29.5px;letter-spacing:0.8px;font-weight:bold;color:#fff">126.54</div>
<div class="t" style="left:2401px;width:360px;text-align:center;top:834px;font-size:28.5px;letter-spacing:0.8px;font-weight:bold;color:#5aaa78">-3.40%<svg width="20" height="12" viewBox="0 0 20 12" style="margin-left:14px;vertical-align:3px"><path d="M0 0 L20 0 L10 12 Z" fill="#5aaa78"/></svg></div>
<div class="a" style="left:366px;top:904px;width:2404px;height:446px;background:#1f2732;overflow:hidden"><div class="a" style="left:0;top:0;width:2404px;height:68px;background:#252f3c"></div></div>
<svg class="a" style="left:378px;top:916px" width="40" height="36" viewBox="0 0 40 36"><rect x="2.9" y="25.9" width="6" height="8.1" fill="#67d4b2"/><rect x="11.9" y="18.2" width="6" height="15.8" fill="#67d4b2"/><rect x="20.9" y="21.1" width="6" height="12.9" fill="#67d4b2"/><rect x="30" y="13.7" width="6.1" height="20.3" fill="#67d4b2"/><path d="M2 20.1 L15.4 7.6 L23.4 16.8 L33 6.5" fill="none" stroke="#67d4b2" stroke-width="3.2"/><path d="M28.1 1.2 L36.5 1.2 L36.5 9.4 Z" fill="#67d4b2"/></svg>
<div class="t" style="left:423px;top:928px;font-size:24px;color:#eceff2">当月用量趋势</div>
<div class="btn" style="left:2568px;top:914px;width:110px;height:48px;font-size:21px">总能耗</div>
<div class="btn on" style="left:2690px;top:914px;width:68px;height:48px;font-size:21px">电</div>
<svg class="a" style="left:0;top:0" width="2786" height="1552" viewBox="0 0 2786 1552"><text x="466.2" y="1274.2" text-anchor="end" font-size="18" fill="#8491a1" font-family="Liberation Sans">0</text><line x1="479.2" y1="1217.7" x2="2380" y2="1217.7" stroke="#424e5c" stroke-width="1.6" stroke-dasharray="6 3"/><text x="466.2" y="1224.2" text-anchor="end" font-size="18" fill="#8491a1" font-family="Liberation Sans">30</text><line x1="479.2" y1="1167.7" x2="2380" y2="1167.7" stroke="#424e5c" stroke-width="1.6" stroke-dasharray="6 3"/><text x="466.2" y="1174.2" text-anchor="end" font-size="18" fill="#8491a1" font-family="Liberation Sans">60</text><line x1="479.2" y1="1117.6" x2="2380" y2="1117.6" stroke="#424e5c" stroke-width="1.6" stroke-dasharray="6 3"/><text x="466.2" y="1124.1" text-anchor="end" font-size="18" fill="#8491a1" font-family="Liberation Sans">90</text><line x1="479.2" y1="1067.6" x2="2380" y2="1067.6" stroke="#424e5c" stroke-width="1.6" stroke-dasharray="6 3"/><text x="466.2" y="1074.1" text-anchor="end" font-size="18" fill="#8491a1" font-family="Liberation Sans">120</text><line x1="479.2" y1="1017.6" x2="2380" y2="1017.6" stroke="#424e5c" stroke-width="1.6" stroke-dasharray="6 3"/><text x="466.2" y="1024.1" text-anchor="end" font-size="18" fill="#8491a1" font-family="Liberation Sans">150</text><line x1="479.2" y1="1017.6" x2="479.2" y2="1267.7" stroke="#8796a6" stroke-width="2"/><rect x="515.6" y="1171.0" width="22" height="96.7" fill="#75cee8"/><rect x="581.4" y="1178.7" width="22" height="89.0" fill="#75cee8"/><rect x="647.3" y="1084.3" width="22" height="183.4" fill="#75cee8"/><rect x="713.1" y="1098.0" width="22" height="169.7" fill="#75cee8"/><rect x="778.9" y="1133.0" width="22" height="134.7" fill="#75cee8"/><rect x="844.8" y="1089.3" width="22" height="178.4" fill="#75cee8"/><rect x="910.6" y="1079.3" width="22" height="188.4" fill="#75cee8"/><rect x="976.4" y="1166.8" width="22" height="100.9" fill="#75cee8"/><rect x="1004.4" y="1137.1" width="22" height="130.6" fill="#f4cd58"/><rect x="1042.2" y="1182.0" width="22" height="85.7" fill="#75cee8"/><rect x="1070.2" y="1182.0" width="22" height="85.7" fill="#f4cd58"/><rect x="1108.1" y="1074.3" width="22" height="193.4" fill="#75cee8"/><rect x="1136.1" y="1103.8" width="22" height="163.9" fill="#f4cd58"/><rect x="1173.9" y="1051.6" width="22" height="216.1" fill="#75cee8"/><rect x="1201.9" y="1098.3" width="22" height="169.4" fill="#f4cd58"/><rect x="1239.7" y="1063.0" width="22" height="204.7" fill="#75cee8"/><rect x="1267.7" y="1100.3" width="22" height="167.4" fill="#f4cd58"/><rect x="1305.6" y="1050.6" width="22" height="217.1" fill="#75cee8"/><rect x="1333.6" y="1099.8" width="22" height="167.9" fill="#f4cd58"/><rect x="1371.4" y="1063.3" width="22" height="204.4" fill="#75cee8"/><rect x="1399.4" y="1080.0" width="22" height="187.7" fill="#f4cd58"/><rect x="1465.2" y="1160.8" width="22" height="106.9" fill="#f4cd58"/><rect x="1531.0" y="1182.0" width="22" height="85.7" fill="#f4cd58"/><rect x="1596.9" y="1093.3" width="22" height="174.4" fill="#f4cd58"/><rect x="1662.7" y="1075.6" width="22" height="192.1" fill="#f4cd58"/><rect x="1728.5" y="1076.6" width="22" height="191.1" fill="#f4cd58"/><rect x="1794.4" y="1107.3" width="22" height="160.4" fill="#f4cd58"/><rect x="1860.2" y="1109.0" width="22" height="158.7" fill="#f4cd58"/><rect x="1926.0" y="1167.7" width="22" height="100.0" fill="#f4cd58"/><rect x="1991.9" y="1177.0" width="22" height="90.7" fill="#f4cd58"/><rect x="2057.7" y="1089.3" width="22" height="178.4" fill="#f4cd58"/><rect x="2123.5" y="1080.8" width="22" height="186.9" fill="#f4cd58"/><rect x="2189.3" y="1088.0" width="22" height="179.7" fill="#f4cd58"/><rect x="2255.2" y="1086.0" width="22" height="181.7" fill="#f4cd58"/><rect x="2321.0" y="1089.8" width="22" height="177.9" fill="#f4cd58"/><line x1="479.2" y1="1267.7" x2="2380" y2="1267.7" stroke="#8796a6" stroke-width="2"/><line x1="540.6" y1="1267.7" x2="540.6" y2="1275.7" stroke="#8796a6" stroke-width="2"/><text x="540.6" y="1294.7" text-anchor="middle" font-size="18" fill="#8491a1" font-family="Liberation Sans">1日</text><line x1="803.9" y1="1267.7" x2="803.9" y2="1275.7" stroke="#8796a6" stroke-width="2"/><text x="803.9" y="1294.7" text-anchor="middle" font-size="18" fill="#8491a1" font-family="Liberation Sans">5日</text><line x1="1067.2" y1="1267.7" x2="1067.2" y2="1275.7" stroke="#8796a6" stroke-width="2"/><text x="1067.2" y="1294.7" text-anchor="middle" font-size="18" fill="#8491a1" font-family="Liberation Sans">9日</text><line x1="1330.6" y1="1267.7" x2="1330.6" y2="1275.7" stroke="#8796a6" stroke-width="2"/><text x="1330.6" y="1294.7" text-anchor="middle" font-size="18" fill="#8491a1" font-family="Liberation Sans">13日</text><line x1="1593.9" y1="1267.7" x2="1593.9" y2="1275.7" stroke="#8796a6" stroke-width="2"/><text x="1593.9" y="1294.7" text-anchor="middle" font-size="18" fill="#8491a1" font-family="Liberation Sans">17日</text><line x1="1857.2" y1="1267.7" x2="1857.2" y2="1275.7" stroke="#8796a6" stroke-width="2"/><text x="1857.2" y="1294.7" text-anchor="middle" font-size="18" fill="#8491a1" font-family="Liberation Sans">21日</text><line x1="2120.5" y1="1267.7" x2="2120.5" y2="1275.7" stroke="#8796a6" stroke-width="2"/><text x="2120.5" y="1294.7" text-anchor="middle" font-size="18" fill="#8491a1" font-family="Liberation Sans">25日</text></svg>
<div class="t" style="left:458px;top:983px;font-size:20px;color:#8795a4">kWh</div>
<svg class="a" style="left:2366px;top:991px" width="25" height="26" viewBox="0 0 25 26"><path d="M12.5 1 V18 M5 10.5 L12.5 18 L20 10.5" fill="none" stroke="#8796a6" stroke-width="1.6"/><path d="M2 16 V23.5 H23 V16" fill="none" stroke="#8796a6" stroke-width="1.8"/></svg>
<div class="a" style="left:1300px;top:1314px;width:38px;height:21px;border-radius:6px;background:#75cee8"></div>
<div class="t" style="left:1346px;top:1316px;font-size:16px;color:#8c97a3">当月</div>
<div class="a" style="left:1396px;top:1314px;width:38px;height:21px;border-radius:6px;background:#f4cd58"></div>
<div class="t" style="left:1442px;top:1316px;font-size:16px;color:#8c97a3">上月</div>
<div class="a" style="left:2398px;top:981px;width:360px;height:174px;background:#242e3b"></div>
<div class="a" style="left:2398px;top:1167px;width:360px;height:174px;background:#242e3b"></div>
<div class="t" style="left:2410px;top:998px;font-size:21px;color:#9aa6b2;-webkit-text-stroke:0.4px #9aa6b2">当月电量</div>
<div class="t" style="right:35px;top:998px;font-size:15px;color:#7f8a95">kWh</div>
<div class="t" style="left:2401px;width:360px;text-align:center;top:1070px;font-size:32px;letter-spacing:0.8px;font-weight:bold;color:#fff">1,352.81</div>
<div class="t" style="left:2410px;top:1184px;font-size:21px;color:#9aa6b2;-webkit-text-stroke:0.4px #9aa6b2">上月同期电量</div>
<div class="t" style="right:35px;top:1184px;font-size:15px;color:#7f8a95">kWh</div>
<div class="t" style="left:2401px;width:360px;text-align:center;top:1237px;font-size:29.5px;letter-spacing:0.8px;font-weight:bold;color:#fff">638.63</div>
<div class="t" style="left:2401px;width:360px;text-align:center;top:1292px;font-size:28.5px;letter-spacing:0.8px;font-weight:bold;color:#e8948a">111.83%<svg width="20" height="12" viewBox="0 0 20 12" style="margin-left:14px;vertical-align:3px"><path d="M0 12 L20 12 L10 0 Z" fill="#e8948a"/></svg></div>
<div class="a" style="left:0;top:0;width:1.5px;height:1540px;background:rgba(190,210,225,0.13)"></div>
<svg class="a" style="left:0;top:1532px" width="20" height="20" viewBox="0 0 20 20"><path d="M0 8 A12 12 0 0 0 12 20 L0 20 Z" fill="#04070c"/><path d="M0.5 7 A12.5 12.5 0 0 0 13 19.5" fill="none" stroke="#a9acb0" stroke-width="1.2"/></svg>
<svg class="a" style="left:2766px;top:1532px" width="20" height="20" viewBox="0 0 20 20"><path d="M20 8 A12 12 0 0 1 8 20 L20 20 Z" fill="#04070c"/><path d="M19.5 7 A12.5 12.5 0 0 1 7 19.5" fill="none" stroke="#5a5f66" stroke-width="1.2"/></svg>
</body></html>
